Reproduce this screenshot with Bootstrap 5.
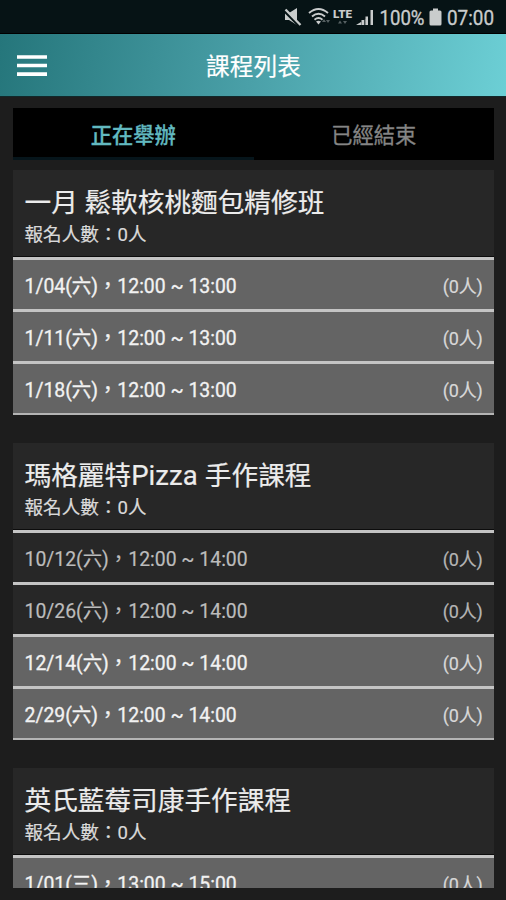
<!DOCTYPE html>
<html lang="zh-Hant">
<head>
<meta charset="utf-8">
<meta name="viewport" content="width=device-width, initial-scale=1">
<title>課程列表</title>
<link href="https://cdn.jsdelivr.net/npm/bootstrap@5.3.0/dist/css/bootstrap.min.css" rel="stylesheet">
<style>
body{background:#1d1d1d;font-family:Roboto,"Noto Sans CJK TC",sans-serif;height:900px;color:#ececec}
.status-bar{height:34px;background:#061315;color:#c9cccc;padding-right:0;border-bottom:1px solid #000}
.status-bar svg{display:block;flex:none}
.app-bar{height:63px;background:linear-gradient(100deg,#25767b,#4aa0a8 50%,#6ccfd5);border-bottom:1px solid #10282a;padding:0 17px}
.app-title{font-size:23.7px;line-height:62px;color:#fff;padding:4px 0 0 1px;-webkit-text-stroke:.2px}
.menu-btn{width:30px;height:62px}
.content-area{padding:11px 12px 0 13px}
.tab-strip{height:52px;background:#000;font-size:21.3px;margin-bottom:10px}
.tab-strip .nav-link{padding:0;color:#858585;border-radius:0;height:52px;border-bottom:3px solid transparent;line-height:55px;-webkit-text-stroke:.3px}
.tab-strip .nav-link.active{background:none;color:#62b9c0;font-weight:500;border-bottom-color:#06151b}
.course-list{height:718px;gap:28px}
.course{background:#272727;flex:none}
.course-head{height:87px;padding:15px 12px 0 11.500px;border-bottom:1px solid #0c0c0c}
.course-name{font-size:26.67px;line-height:36px;margin:0;font-weight:400;-webkit-text-stroke:.2px}
.latin-word{font-size:27.5px;letter-spacing:.1px;line-height:1}
.course-count{font-size:18.6px;line-height:28px;color:#d9d9d9;-webkit-text-stroke:.2px}
.session{height:52px;border-top:3px solid #c4c4c4;padding:0 11.500px;font-size:19.4px;line-height:54px;color:#bcbcbc;white-space:pre;-webkit-text-stroke:.2px}
.session.open{background:#646464;color:#f2f2f2;-webkit-text-stroke:.3px}
.session .seats{font-size:18px;letter-spacing:-.2px;color:#b5b5b5;-webkit-text-stroke:.2px}
.session.open .seats{color:#d8d8d8}
.session:last-child{height:54px;border-bottom:2px solid #b4b4b4}
</style>
<script src="https://cdn.jsdelivr.net/npm/bootstrap@5.3.0/dist/js/bootstrap.bundle.min.js"></script>
</head>
<body class="overflow-hidden">
<div class="status-bar d-flex justify-content-end align-items-center">
  <svg width="236" height="33" viewBox="270 0 236 33" fill="#c9cccc">
    <path d="M285 13h4l8-5v17l-8-5h-4z"/>
    <path d="M284 10.500l16 16" stroke="#061315" stroke-width="3"/>
    <path d="M285.500 9.500l15 15.500" stroke="#c9cccc" stroke-width="2.300"/>
    <g fill="none" stroke="#c9cccc" stroke-width="1.900"><path d="M309 13q9.500-8 19 0M312 16.500q6.500-5.500 13 0M314.500 19.700q4-3.200 8 0"/></g>
    <path d="M316 21.500q2.500-1.500 5 0l-2.500 3z"/>
    <g fill="#566062"><path d="M322 22l2-3 2 3zM326 20h4l-2 3zM338 23.500l2-3 2 3zM343 21h4l-2 3z"/></g>
    <text x="333" y="17.500" font-size="11.500" font-weight="900" textLength="19" lengthAdjust="spacingAndGlyphs">LTE</text>
    <path d="M356 25l5-3v3zM361.500 20h2.500v5h-2.500zM365.500 16.500h2.500V25h-2.500zM370.500 10h2.500v15h-2.500z"/>
    <path d="M358 25L368 17v8z" opacity=".3"/>
    <text x="379.500" y="25" font-size="21" textLength="45" lengthAdjust="spacingAndGlyphs" stroke="#c9cccc" stroke-width=".35">100%</text>
    <path d="M433 8.500h5v2h2q1.500 0 1.500 1.500v12q0 1.500-1.500 1.500h-9q-1.500 0-1.500-1.500V12q0-1.500 1.500-1.500h2z"/>
    <text x="447" y="25" font-size="21" textLength="47" lengthAdjust="spacingAndGlyphs" stroke="#c9cccc" stroke-width=".35">07:00</text>
  </svg>
</div>
<header class="app-bar d-flex align-items-center justify-content-between">
  <button class="menu-btn btn p-0 border-0" aria-label="選單"><svg class="d-block" width="30" height="24" viewBox="0 0 30 24" stroke="#fff" stroke-width="3.700"><path d="M0 4h30M0 12.500h30M0 21.200h30"/></svg></button>
  <div class="app-title">課程列表</div>
  <div class="menu-btn"></div>
</header>
<main class="content-area">
  <nav class="tab-strip nav nav-justified">
    <a class="nav-link active">正在舉辦</a>
    <a class="nav-link">已經結束</a>
  </nav>
  <div class="course-list d-flex flex-column overflow-hidden">
    <section class="course">
      <div class="course-head"><h2 class="course-name">一月 鬆軟核桃麵包精修班</h2><div class="course-count">報名人數：0人</div></div>
      <div class="session open d-flex justify-content-between"><span>1/04(六)，12:00 ~ 13:00</span><span class="seats">(0人)</span></div>
      <div class="session open d-flex justify-content-between"><span>1/11(六)，12:00 ~ 13:00</span><span class="seats">(0人)</span></div>
      <div class="session open d-flex justify-content-between"><span>1/18(六)，12:00 ~ 13:00</span><span class="seats">(0人)</span></div>
    </section>
    <section class="course">
      <div class="course-head"><h2 class="course-name">瑪格麗特<span class="latin-word">Pizza </span>手作課程</h2><div class="course-count">報名人數：0人</div></div>
      <div class="session d-flex justify-content-between"><span>10/12(六)，12:00 ~ 14:00</span><span class="seats">(0人)</span></div>
      <div class="session d-flex justify-content-between"><span>10/26(六)，12:00 ~ 14:00</span><span class="seats">(0人)</span></div>
      <div class="session open d-flex justify-content-between"><span>12/14(六)，12:00 ~ 14:00</span><span class="seats">(0人)</span></div>
      <div class="session open d-flex justify-content-between"><span>2/29(六)，12:00 ~ 14:00</span><span class="seats">(0人)</span></div>
    </section>
    <section class="course">
      <div class="course-head"><h2 class="course-name">英氏藍莓司康手作課程</h2><div class="course-count">報名人數：0人</div></div>
      <div class="session open d-flex justify-content-between"><span>1/01(三)，13:00 ~ 15:00</span><span class="seats">(0人)</span></div>
    </section>
  </div>
</main>
</body>
</html>
